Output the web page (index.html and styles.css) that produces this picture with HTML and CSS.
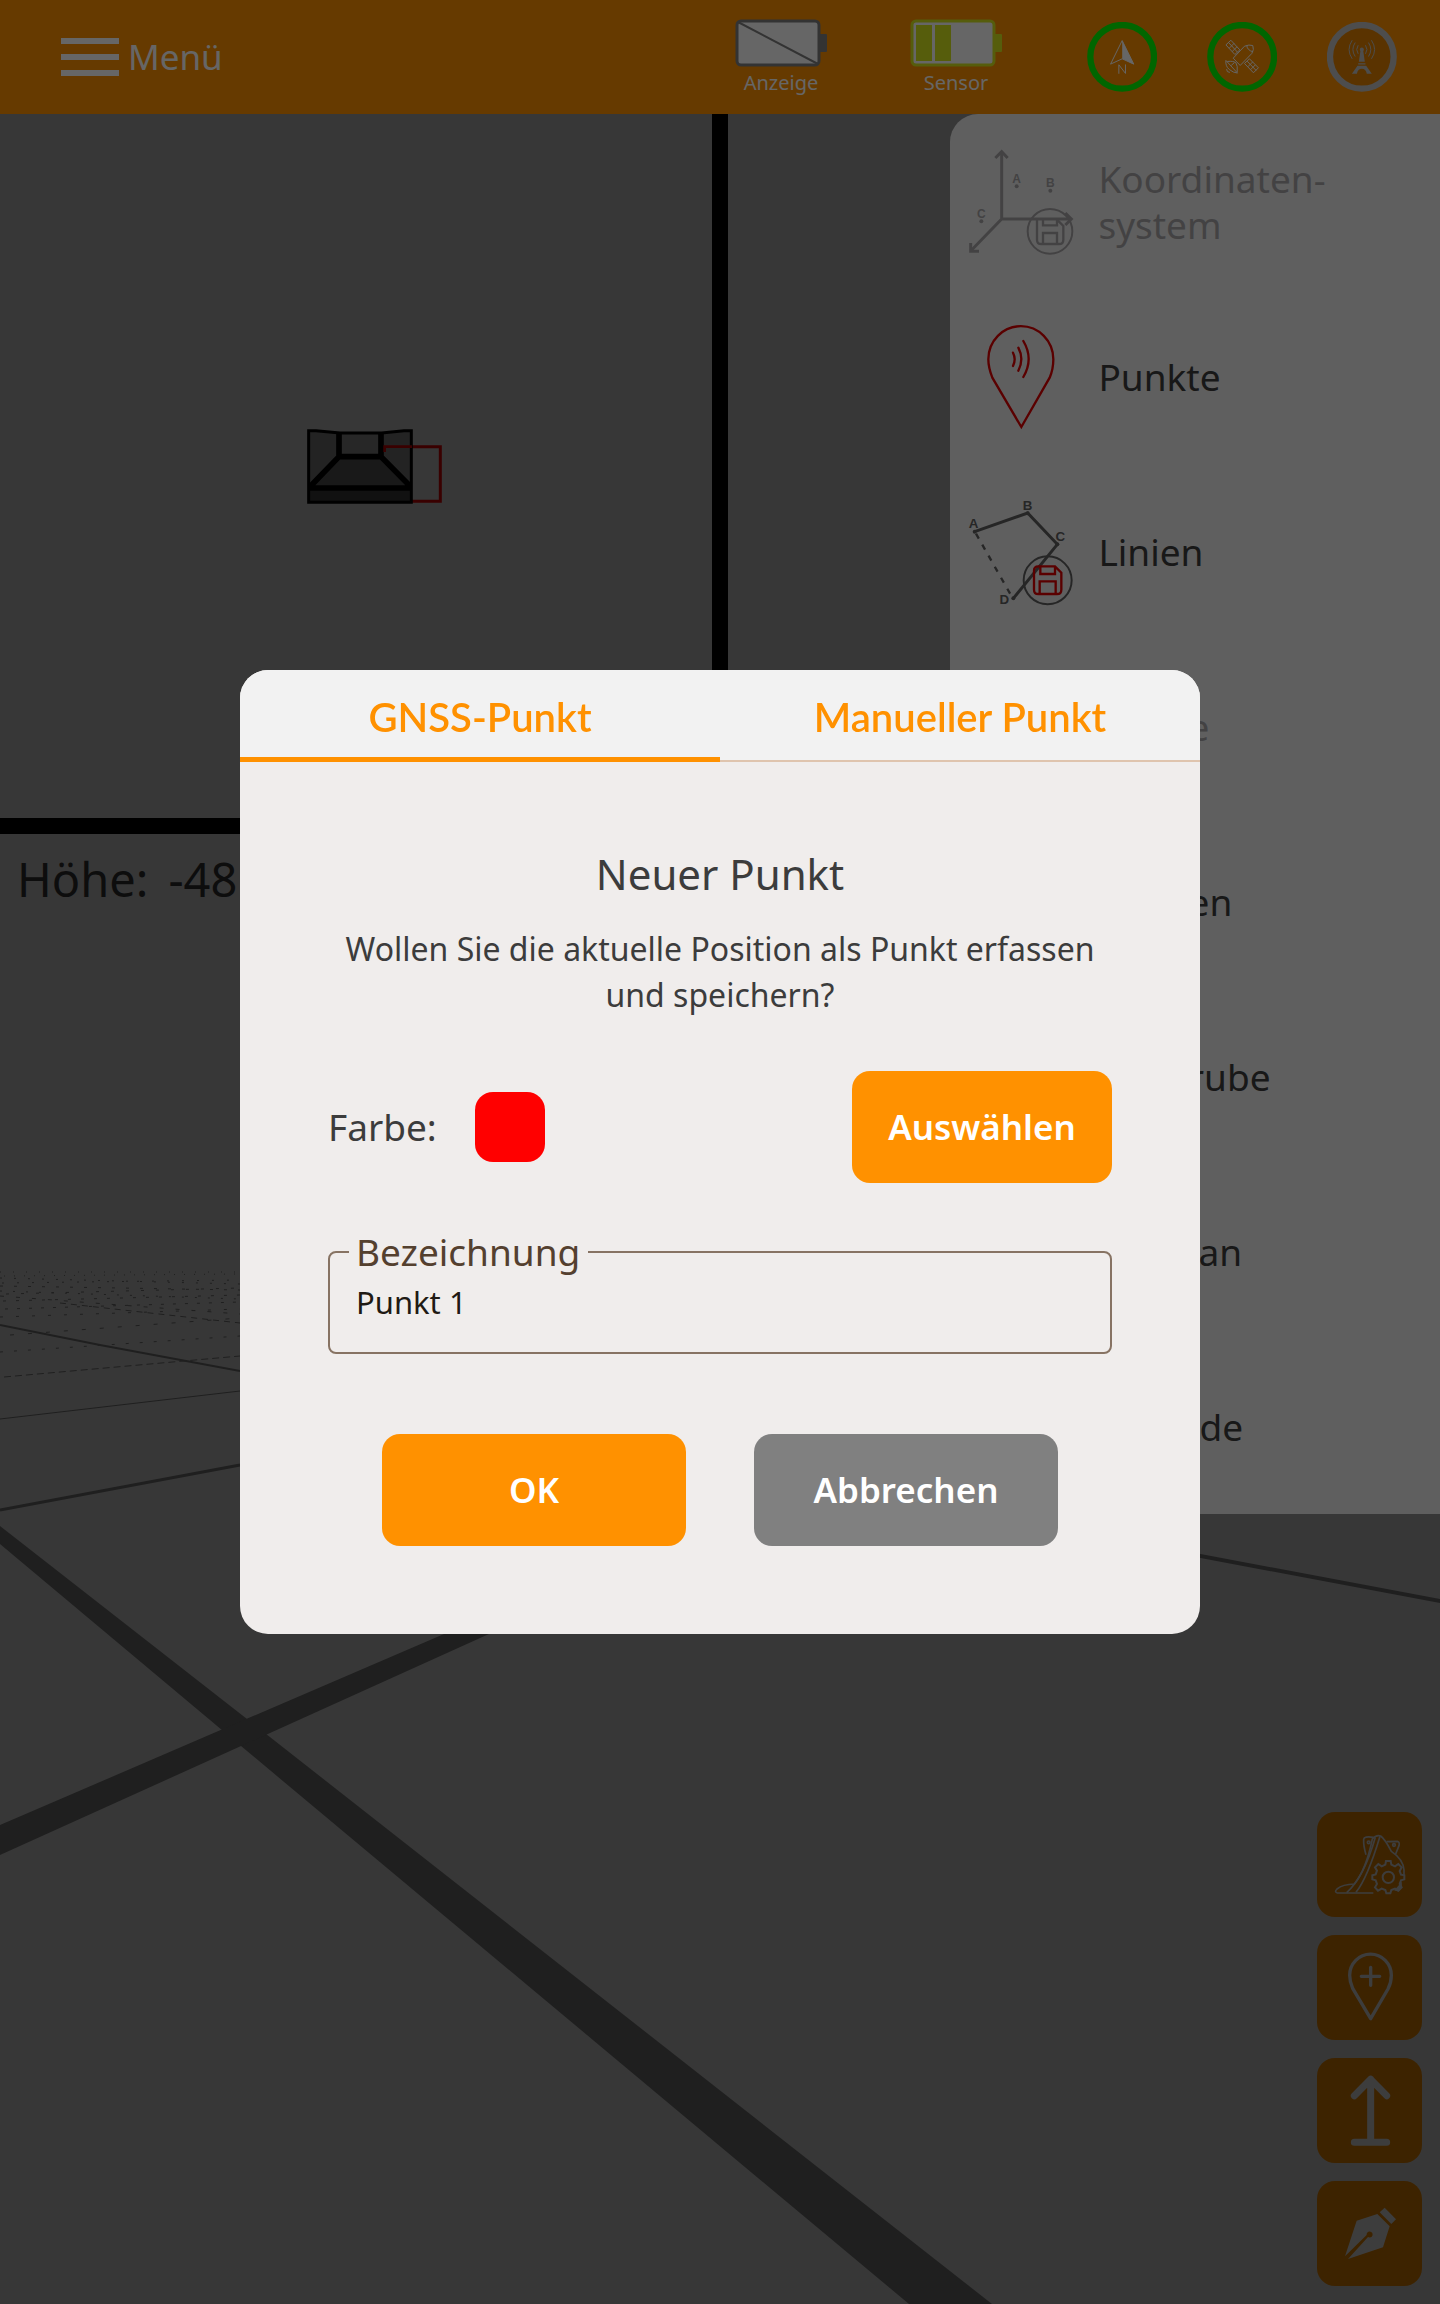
FILE: index.html
```html
<!DOCTYPE html>
<html lang="de">
<head>
<meta charset="utf-8">
<meta name="viewport" content="width=device-width, initial-scale=1">
<title>Neuer Punkt</title>
<link rel="stylesheet" href="styles.css">
</head>
<body>
<div class="app">
  <svg class="scene" viewBox="0 0 1440 2304" preserveAspectRatio="xMidYMid slice" aria-hidden="true">
    <g fill="#4e4e4e">
      <path d="M0 1526L247 1719L992 2304H909L241 1746L0 1544Z"/>
      <path d="M0 1825L444 1634H489L0 1855Z"/>
      <path d="M1190 1552L1440 1599V1603L1190 1556Z"/>
    </g>
    <g fill="none" stroke="#4e4e4e">
      <path d="M0 1510L240 1465" stroke-width="3"/>
      <path d="M0 1325L100 1345L240 1371" stroke-width="2"/>
      <path d="M0 1419L240 1391"/>
      <path d="M4 1377L240 1356" stroke-dasharray="7 4"/>
      <path d="M0 1352L240 1336" stroke-dasharray="3 11"/>
      <path d="M60 1303L240 1323" stroke-dasharray="6 5"/>
      <path d="M10 1335L240 1318" stroke-dasharray="4 14"/>
      <path d="M0 1317L240 1309" stroke-dasharray="3 13"/>
      <path d="M5 1309L240 1302" stroke-dasharray="3 9"/>
      <path d="M0 1296L240 1314" stroke-dasharray="4 12"/>
      <path d="M3 1301L240 1295" stroke-dasharray="3 10"/>
      <path d="M0 1291L240 1299" stroke-dasharray="2 11"/>
      <path d="M6 1294L240 1288" stroke-dasharray="3 12"/>
      <path d="M0 1286L240 1290" stroke-dasharray="3 11"/>
      <path d="M2 1283L240 1280" stroke-dasharray="2 13"/>
      <path d="M0 1278L240 1284" stroke-dasharray="2 12"/>
      <path d="M4 1276L240 1274" stroke-dasharray="1 9"/>
      <path d="M0 1272L240 1272" stroke-dasharray="1 12"/>
    </g>
  </svg>

  <header class="topbar">
    <button class="menu-button" type="button">
      <svg width="58" height="38" viewBox="0 0 58 38" fill="#fff" aria-hidden="true"><path d="M0 0h58v6H0zM0 16h58v6H0zM0 32h58v6H0z"/></svg>
      <span>Menü</span>
    </button>
    <div class="batteries">
      <div class="battery">
        <svg width="92" height="48" viewBox="0 0 92 48" aria-hidden="true">
          <rect x="84" y="15" width="8" height="18" rx="1" fill="#808080"/>
          <rect x="2" y="2" width="82" height="44" rx="4" fill="#fff" stroke="#808080" stroke-width="3"/>
          <path d="M3 3L83 45" stroke="#808080" stroke-width="2"/>
        </svg>
        <span>Anzeige</span>
      </div>
      <div class="battery">
        <svg width="92" height="48" viewBox="0 0 92 48" aria-hidden="true">
          <rect x="84" y="15" width="8" height="18" rx="1" fill="#d8e81e"/>
          <rect x="2" y="2" width="82" height="44" rx="4" fill="#fff" stroke="#d8e81e" stroke-width="3"/>
          <path d="M6 6h16v36H6zM25 6h16v36H25z" fill="#d8e81e"/>
        </svg>
        <span>Sensor</span>
      </div>
    </div>
    <div class="signals">
      <svg width="70" height="70" viewBox="50 51 211 211" aria-label="Kompass">
        <circle cx="156" cy="156" r="96" fill="none" stroke="#00ff00" stroke-width="19"/>
        <path d="M156 107L121 178L156 162L191 178Z" fill="none" stroke="#fff" stroke-width="3"/>
        <path d="M156 107L191 178L156 162Z" fill="#fff"/>
        <path d="M146 207V180L166 206V179" fill="none" stroke="#fff" stroke-width="3"/>
      </svg>
      <svg width="70" height="70" viewBox="411 51 211 211" aria-label="Satellit">
        <circle cx="517" cy="156" r="96" fill="none" stroke="#00ff00" stroke-width="19"/>
        <g fill="none" stroke="#fff" stroke-width="3">
          <path d="M483 106L510 135L495 149L468 120ZM476 113L503 142M493 115L478 130M502 125L487 140"/>
          <path d="M539 162L566 189L551 204L524 176ZM532 169L559 197M549 171L534 186M557 180L542 195"/>
          <path d="M490 160L524 124Q538 118 549 122Q554 134 546 146L511 182ZM531 122Q532 136 550 141"/>
          <path d="M468 167L503 205M468 167Q466 184 478 194Q490 204 503 205M472 170Q492 168 498 174Q504 182 502 202M484 182L494 173M470 193Q470 203 480 203"/>
        </g>
      </svg>
      <svg width="70" height="70" viewBox="771 51 211 211" aria-label="Funk">
        <circle cx="876" cy="156" r="96" fill="#e08000" stroke="#c0c0c0" stroke-width="19"/>
        <g fill="#c0c0c0">
          <circle cx="876" cy="134" r="6"/>
          <path d="M872 136H880L885 171H867ZM865 175H887V179H865ZM863 183H889L906 207H891Q888 192 876 192Q864 192 861 207H846Z"/>
        </g>
        <g fill="none" stroke="#c0c0c0" stroke-width="3">
          <path d="M865 121Q856 134 865 147M887 121Q896 134 887 147M856 113Q842 134 856 155M896 113Q910 134 896 155M847 106Q828 134 847 162M905 106Q924 134 905 162"/>
        </g>
      </svg>
    </div>
  </header>

  <main class="workspace">
    <section class="views">
      <svg class="plan" viewBox="0 0 712 704" aria-hidden="true">
        <g transform="translate(280 296) scale(.3333)">
          <path d="M312 122V110H481V274H390" fill="none" stroke="#900000" stroke-width="9"/>
          <path d="M86 62H108L180 70H305L372 62H394V277H86Z" fill="#585858"/>
          <path d="M180 70H305V140H180Z" fill="#626262"/>
          <path d="M180 140H305L390 228H95Z" fill="#404040"/>
          <path d="M86 232H394V277H86Z" fill="#2b2b2b"/>
          <path d="M86 62H108L180 69H305L372 62H394V277H86Z" fill="none" stroke="#000" stroke-width="9"/>
          <path d="M177 68V140L92 228M303 68V140L390 228M170 140H310M86 234H394" fill="none" stroke="#000" stroke-width="17"/>
          <path d="M314 126V110H396" fill="none" stroke="#900000" stroke-width="8"/>
        </g>
      </svg>
      <p class="altitude"><span>Höhe:</span><span>-48</span></p>
    </section>
    <nav class="side-menu">
      <a class="item item-off" href="#koordinaten">
        <svg viewBox="78 108 330 330" fill="none" stroke="#a8a6a8" aria-hidden="true">
          <path d="M185 122V324H392M185 324L92 420" stroke-width="9"/>
          <path d="M166 141L185 122L203 141M376 306L394 324L376 342M92 396V421H117" stroke-width="9"/>
          <circle cx="330" cy="361" r="67" stroke-width="6"/>
          <path d="M291 326V386Q291 399 304 399H357Q370 399 370 386V345L351 326M309 326V343H351V326M309 399V366H351V399" stroke-width="7"/>
          <g fill="#a8a6a8" stroke="none"><circle cx="230" cy="226" r="6"/><circle cx="331" cy="239" r="6"/><circle cx="124" cy="331" r="6"/>
          <text class="mark" x="230" y="217">A</text><text class="mark" x="331" y="229">B</text><text class="mark" x="124" y="322">C</text></g>
        </svg>
        <span>Koordinaten-<br>system</span>
      </a>
      <a class="item" href="#punkte">
        <svg viewBox="78 633 330 330" fill="none" stroke="#e00000" stroke-width="7" aria-hidden="true">
          <path d="M244 948L157 800Q145 770 145 745A97 99 0 0 1 340 745Q340 775 329 800Z"/>
          <path d="M219 725Q229 745 219 765M235 710Q253 744 235 779M250 690Q282 744 250 798" stroke-linecap="round"/>
        </svg>
        <span>Punkte</span>
      </a>
      <a class="item" href="#linien">
        <svg viewBox="78 1158 330 330" fill="none" stroke="#606060" aria-hidden="true">
          <path d="M104 1262L263 1206L352 1300L220 1462" stroke-width="9"/>
          <path d="M108 1268L216 1458" stroke-width="7" stroke-dasharray="17 21"/>
          <circle cx="323" cy="1408" r="72" stroke-width="6"/>
          <g fill="#606060" stroke="none"><circle cx="104" cy="1262" r="6"/><circle cx="263" cy="1207" r="6"/><circle cx="352" cy="1300" r="6"/><circle cx="220" cy="1462" r="6"/>
          <text class="mark mark-lg" x="101" y="1251">A</text><text class="mark mark-lg" x="263" y="1197">B</text><text class="mark mark-lg" x="361" y="1291">C</text><text class="mark mark-lg" x="193" y="1478">D</text></g>
          <path d="M282 1379Q282 1366 295 1366H345L364 1385V1436Q364 1449 351 1449H295Q282 1449 282 1436ZM301 1366V1389H345V1366M299 1449V1411H347V1449" stroke="#e00000" stroke-width="7"/>
        </svg>
        <span>Linien</span>
      </a>
      <a class="item item-off" href="#flaeche"><span>Fläche</span></a>
      <a class="item" href="#flaechen"><span>Flächen</span></a>
      <a class="item" href="#baugrube"><span>Baugrube</span></a>
      <a class="item" href="#bauplan"><span>Bauplan</span></a>
      <a class="item" href="#gelaende"><span>Gelände</span></a>
    </nav>
  </main>

  <div class="tools">
    <button type="button" aria-label="Löffel einstellen">
      <svg viewBox="81 66 315 315" fill="none" stroke="#999" stroke-width="5" aria-hidden="true">
        <path d="M250 309H142Q132 306 141 297Q158 283 193 282Q228 240 247 147Q258 134 272 138Q284 146 304 184Q340 208 342 240V270"/>
        <path d="M170 308Q222 262 256 142M198 307Q232 265 270 139M250 142Q222 138 221 148Q220 168 228 194M290 155L322 154Q330 156 327 167L317 192"/>
        <circle cx="236" cy="157" r="4"/><circle cx="312" cy="165" r="4"/>
        <path d="M288 213H302L304 224L315 229L325 222L335 232L329 243L333 254L343 256V268L333 271L329 282L335 292L325 302L315 296L304 300L301 310H289L286 300L275 296L264 302L255 292L261 282L257 271L247 268V256L257 253L261 242L255 232L265 222L275 229L286 224Z" fill="#995800" stroke-width="6"/>
        <circle cx="295" cy="262" r="17" stroke-width="6"/>
        <path d="M317 300L333 282V292L325 302Z" fill="#999"/>
      </svg>
    </button>
    <button type="button" aria-label="Punkt hinzufügen">
      <svg viewBox="81 435 315 315" fill="none" stroke="#999" stroke-width="10" stroke-linejoin="round" stroke-linecap="round" aria-hidden="true">
        <path d="M242 686L188 595Q179 575 179 556A62 63 0 0 1 304 556Q304 578 294 597Z"/>
        <path d="M242 532V586M214 559H269"/>
      </svg>
    </button>
    <button type="button" aria-label="Nach oben">
      <svg viewBox="81 804 315 315" fill="none" stroke="#999" stroke-width="21" stroke-linecap="round" stroke-linejoin="round" aria-hidden="true">
        <path d="M242 1057V868M193 917L242 868L290 917M193 1057H290"/>
      </svg>
    </button>
    <button type="button" aria-label="Zeichnen">
      <svg viewBox="81 1173 315 315" fill="#999" aria-hidden="true">
        <path d="M200 1292L262 1272L299 1309L279 1372L174 1407L234 1341A9 9 0 1 0 230 1335L165 1399Z"/>
        <path d="M284 1253L318 1288L304 1302L269 1267Z"/>
      </svg>
    </button>
  </div>
</div>

<div class="backdrop">
  <form class="dialog" role="dialog" aria-labelledby="dialog-title">
    <div class="tabs" role="tablist">
      <button class="tab tab-active" type="button" role="tab" aria-selected="true">GNSS-Punkt</button>
      <button class="tab" type="button" role="tab" aria-selected="false">Manueller Punkt</button>
    </div>
    <div class="dialog-body">
      <h1 id="dialog-title">Neuer Punkt</h1>
      <p class="question">Wollen Sie die aktuelle Position als Punkt erfassen und speichern?</p>
      <div class="color-row">
        <span>Farbe:</span>
        <span class="swatch"></span>
        <button class="button button-pick" type="button">Auswählen</button>
      </div>
      <fieldset class="field">
        <legend><label for="name">Bezeichnung</label></legend>
        <input id="name" type="text" value="Punkt 1">
      </fieldset>
      <div class="actions">
        <button class="button" type="submit">OK</button>
        <button class="button button-cancel" type="button">Abbrechen</button>
      </div>
    </div>
  </form>
</div>
</body>
</html>
```
FILE: styles.css
```css
* { box-sizing: border-box; }

body {
  margin: 0;
  font-family: "Noto Sans", sans-serif;
  font-size: 37px;
  line-height: 46px;
  color: #3c3c3c;
}

button, input { font: inherit; margin: 0; }
button { border: 0; cursor: pointer; }

.app {
  position: relative;
  min-height: 100vh;
  background: #8a8a8a;
  overflow: hidden;
}

.scene {
  position: absolute;
  inset: 0;
  width: 100%;
  height: 100%;
}

/* Top bar */
.topbar {
  position: relative;
  display: flex;
  align-items: center;
  height: 114px;
  padding: 0 43px 0 61px;
  background: #ff9100;
  color: #fff;
}

.menu-button {
  display: flex;
  align-items: center;
  gap: 9px;
  margin-right: auto;
  padding: 0;
  background: none;
  color: #fff;
  font-size: 35px;
}

.batteries { display: flex; gap: 83px; margin-right: 85px; }

.battery {
  display: flex;
  flex-direction: column;
  align-items: center;
  gap: 4px;
  font-size: 20px;
  line-height: 24px;
}

.signals { display: flex; gap: 50px; }

/* Workspace */
.workspace {
  position: relative;
  display: flex;
  align-items: flex-start;
  justify-content: space-between;
}

.views { width: calc(50% + 8px); }

.plan {
  display: block;
  width: 100%;
  background: #8a8a8a;
  border: solid #000;
  border-width: 0 16px 16px 0;
}

.altitude {
  display: flex;
  gap: 20px;
  margin: 0;
  padding: 15px 17px;
  font-size: 47px;
  line-height: 60px;
  color: #222;
}

.side-menu {
  width: 34%;
  background: #eee;
  border-top-left-radius: 28px;
}

.item {
  display: grid;
  grid-template-columns: 110px 1fr;
  column-gap: 22px;
  align-items: center;
  height: 175px;
  padding-left: 16px;
  color: #3c3c3c;
  text-decoration: none;
}

.item span { grid-column: 2; }
.item-off { color: #a8a6a8; }

.mark {
  font: 700 36px "Liberation Sans", sans-serif;
  text-anchor: middle;
}

.mark-lg { font-size: 40px; }

.tools {
  position: absolute;
  right: 18px;
  bottom: 18px;
  display: grid;
  gap: 18px;
}

.tools button {
  width: 105px;
  height: 105px;
  padding: 0;
  border-radius: 18px;
  background: #995800;
}

.tools svg { display: block; }

/* Dialog */
.backdrop {
  position: fixed;
  inset: 0;
  display: flex;
  align-items: center;
  justify-content: center;
  background: rgba(0, 0, 0, .6);
}

.dialog {
  width: 66.6667%;
  overflow: hidden;
  border-radius: 28px;
  background: #f0edec;
}

.tabs {
  display: flex;
  background: #f2f2f2;
  border-bottom: 2px solid #dfc4ae;
}

.tab {
  position: relative;
  flex: 1;
  height: 90px;
  padding: 4px 0 0;
  background: none;
  color: #ff9100;
  font-family: Lato, sans-serif;
  font-size: 40px;
  font-weight: 600;
}

.tab-active::after {
  content: "";
  position: absolute;
  inset: auto 0 -2px;
  height: 5px;
  background: #ff9100;
}

.dialog-body { padding: 84px 88px 88px; }

h1 {
  margin: 0 0 24px;
  font-size: 42px;
  font-weight: 400;
  line-height: 56px;
  text-align: center;
}

.question {
  margin: 0 0 53px;
  font-size: 32px;
  text-align: center;
}

.color-row { display: flex; align-items: center; gap: 38px; }

.swatch {
  width: 70px;
  height: 70px;
  margin-right: auto;
  border-radius: 18px;
  background: #f00;
}

.button {
  width: 304px;
  height: 112px;
  padding: 0;
  border-radius: 18px;
  background: #ff9100;
  color: #fff;
  font-size: 35px;
  font-weight: 600;
}

.button-pick { width: 260px; }
.button-cancel { background: #808080; }

.field {
  min-width: 0;
  margin: 45px 0 80px;
  padding: 0 19px;
  border: 2px solid #877363;
  border-radius: 8px;
  color: #54402f;
}

.field legend { padding: 0 8px 0 7px; line-height: 48px; }

.field input {
  display: block;
  width: 100%;
  height: 76px;
  padding: 0 7px 24px;
  border: 0;
  outline: 0;
  background: none;
  color: #1f1a14;
  font-size: 31px;
}

.actions { display: flex; justify-content: center; gap: 68px; }
```
